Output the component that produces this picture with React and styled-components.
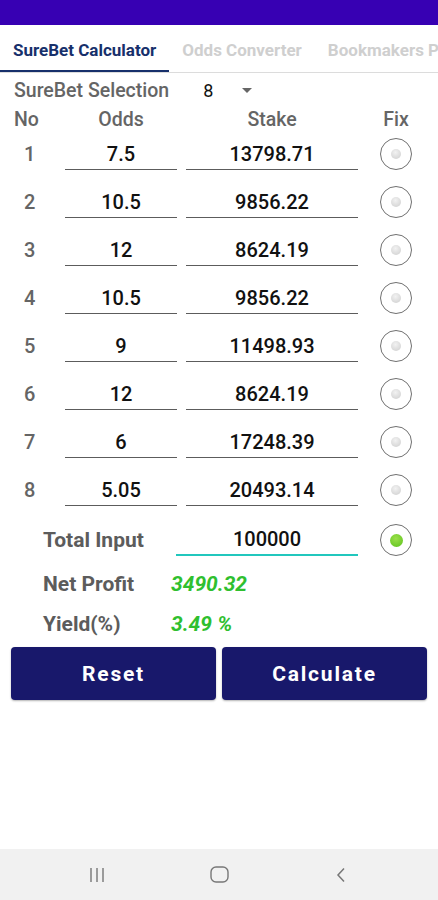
import React from "react";
import styled, { createGlobalStyle } from "styled-components";

const GlobalStyle = createGlobalStyle`
  html, body {
    margin: 0;
    padding: 0;
    background: #ffffff;
  }
  body {
    font-family: Roboto, "Noto Sans", "Liberation Sans", sans-serif;
  }
  * {
    box-sizing: border-box;
  }
`;

const Screen = styled.div`
  width: 438px;
  height: 900px;
  display: flex;
  flex-direction: column;
  overflow: hidden;
  background: #fff;
`;

const StatusBar = styled.div`
  height: 25px;
  background: #3700b3;
  flex-shrink: 0;
`;

const TabBar = styled.div`
  height: 48px;
  display: flex;
  white-space: nowrap;
  overflow: hidden;
  border-bottom: 1px solid #dcdcdc;
  flex-shrink: 0;
`;

const Tab = styled.div`
  padding: 4px 13px 0;
  display: flex;
  align-items: center;
  font-size: 17px;
  font-weight: 700;
  color: ${p => (p.active ? "#17306b" : "#cfcfcf")};
  border-bottom: 2px solid ${p => (p.active ? "#17306b" : "transparent")};
  flex-shrink: 0;
`;

const Content = styled.div`
  flex: 1;
  display: flex;
  flex-direction: column;
`;

const SelectionRow = styled.div`
  height: 35px;
  display: flex;
  align-items: center;
  padding-left: 14px;
`;

const Label = styled.span`
  font-size: 19.5px;
  font-weight: 500;
  color: #656565;
`;

const Spinner = styled.div`
  display: flex;
  align-items: center;
  margin-left: 34px;
  font-size: 18px;
  color: #111;
`;

const Caret = styled.span`
  width: 0;
  height: 0;
  margin-left: 29px;
  border-left: 5px solid transparent;
  border-right: 5px solid transparent;
  border-top: 5px solid #666;
`;

const Grid = styled.div`
  display: grid;
  grid-template-columns: 65px 112px 181px 22px 32px;
  align-items: center;
`;

const HeaderRow = styled(Grid)`
  height: 22px;
`;

const HeadCell = styled.div`
  font-size: 19.5px;
  font-weight: 500;
  color: #656565;
  text-align: ${p => p.align || "center"};
  padding-left: ${p => p.pad || 0}px;
  white-space: nowrap;
`;

const BetRow = styled(Grid)`
  height: 48px;
`;

const RowNo = styled.div`
  font-size: 20px;
  font-weight: 500;
  color: #656565;
  padding-left: 24px;
`;

const Field = styled.div`
  height: 32px;
  margin-top: 8px;
  align-self: start;
  display: flex;
  align-items: center;
  justify-content: center;
  font-size: 20px;
  font-weight: 500;
  color: #111;
  border-bottom: ${p => (p.focused ? "2px solid #21c7bd" : "1px solid #5c5c5c")};
  margin-left: ${p => p.gap || 0}px;
`;

const Radio = styled.div`
  grid-column: ${p => p.col || 5};
  width: 32px;
  height: 32px;
  border-radius: 50%;
  border: 1.5px solid #707070;
  display: flex;
  align-items: center;
  justify-content: center;
  background: #fff;

  &::after {
    content: "";
    width: ${p => (p.checked ? 13 : 10)}px;
    height: ${p => (p.checked ? 13 : 10)}px;
    border-radius: 50%;
    background: ${p =>
      p.checked
        ? "radial-gradient(circle at 45% 35%, #9be04a, #5cc21c)"
        : "radial-gradient(circle at 45% 35%, #f2f2f2, #cdcdcd)"};
  }
`;

const TotalRow = styled.div`
  height: 48px;
  display: grid;
  grid-template-columns: 176px 182px 22px 32px;
  align-items: center;
  margin-top: 2px;
`;

const BoldLabel = styled.div`
  font-size: 21px;
  font-weight: 700;
  color: #5c5c5c;
  padding-left: 43px;
  white-space: nowrap;
`;

const ResultRow = styled.div`
  height: 40px;
  display: grid;
  grid-template-columns: 171px 1fr;
  align-items: center;
`;

const ResultValue = styled.div`
  font-size: 21px;
  font-weight: 700;
  font-style: italic;
  color: #2fbf2f;
`;

const ButtonBar = styled.div`
  display: flex;
  gap: 6px;
  padding: 0 11px;
  margin-top: 3px;
`;

const Button = styled.button`
  flex: 1;
  height: 53px;
  border: none;
  border-radius: 4px;
  background: #18186b;
  color: #fff;
  font-family: Roboto, "Liberation Sans", sans-serif;
  font-size: 21px;
  font-weight: 700;
  letter-spacing: 1.8px;
  box-shadow: 0 1px 2px rgba(0, 0, 0, 0.3);
`;

const NavBar = styled.div`
  height: 51px;
  background: #f1f1f1;
  display: flex;
  align-items: center;
  justify-content: center;
  flex-shrink: 0;
`;

const NavSlot = styled.div`
  width: 122px;
  display: flex;
  justify-content: center;
  color: #777;
`;

const bets = [
  { odds: "7.5", stake: "13798.71" },
  { odds: "10.5", stake: "9856.22" },
  { odds: "12", stake: "8624.19" },
  { odds: "10.5", stake: "9856.22" },
  { odds: "9", stake: "11498.93" },
  { odds: "12", stake: "8624.19" },
  { odds: "6", stake: "17248.39" },
  { odds: "5.05", stake: "20493.14" }
];

const App = () => {
  return (
    <Screen>
      <GlobalStyle />
      <StatusBar />
      <TabBar>
        <Tab active>SureBet Calculator</Tab>
        <Tab>Odds Converter</Tab>
        <Tab>Bookmakers Promotion</Tab>
      </TabBar>
      <Content>
        <SelectionRow>
          <Label>SureBet Selection</Label>
          <Spinner>
            8
            <Caret />
          </Spinner>
        </SelectionRow>
        <HeaderRow>
          <HeadCell align="left" pad={14}>No</HeadCell>
          <HeadCell>Odds</HeadCell>
          <HeadCell pad={9}>Stake</HeadCell>
          <span />
          <HeadCell>Fix</HeadCell>
        </HeaderRow>
        {bets.map((b, i) => (
          <BetRow key={i}>
            <RowNo>{i + 1}</RowNo>
            <Field>{b.odds}</Field>
            <Field gap={9}>{b.stake}</Field>
            <Radio />
          </BetRow>
        ))}
        <TotalRow>
          <BoldLabel>Total Input</BoldLabel>
          <Field focused>100000</Field>
          <Radio checked col={4} />
        </TotalRow>
        <ResultRow>
          <BoldLabel>Net Profit</BoldLabel>
          <ResultValue>3490.32</ResultValue>
        </ResultRow>
        <ResultRow>
          <BoldLabel>Yield(%)</BoldLabel>
          <ResultValue>3.49 %</ResultValue>
        </ResultRow>
        <ButtonBar>
          <Button>Reset</Button>
          <Button>Calculate</Button>
        </ButtonBar>
      </Content>
      <NavBar>
        <NavSlot>
          <svg width="16" height="16" viewBox="0 0 16 16">
            <path d="M2 1v14M8 1v14M14 1v14" stroke="#777" strokeWidth="1.4" />
          </svg>
        </NavSlot>
        <NavSlot>
          <svg width="19" height="17" viewBox="0 0 19 17">
            <rect x="1" y="1" width="17" height="15" rx="5" fill="none" stroke="#777" strokeWidth="1.4" />
          </svg>
        </NavSlot>
        <NavSlot>
          <svg width="10" height="16" viewBox="0 0 10 16">
            <path d="M8 1.5 2 8l6 6.5" fill="none" stroke="#777" strokeWidth="1.5" />
          </svg>
        </NavSlot>
      </NavBar>
    </Screen>
  );
};

export default App;
